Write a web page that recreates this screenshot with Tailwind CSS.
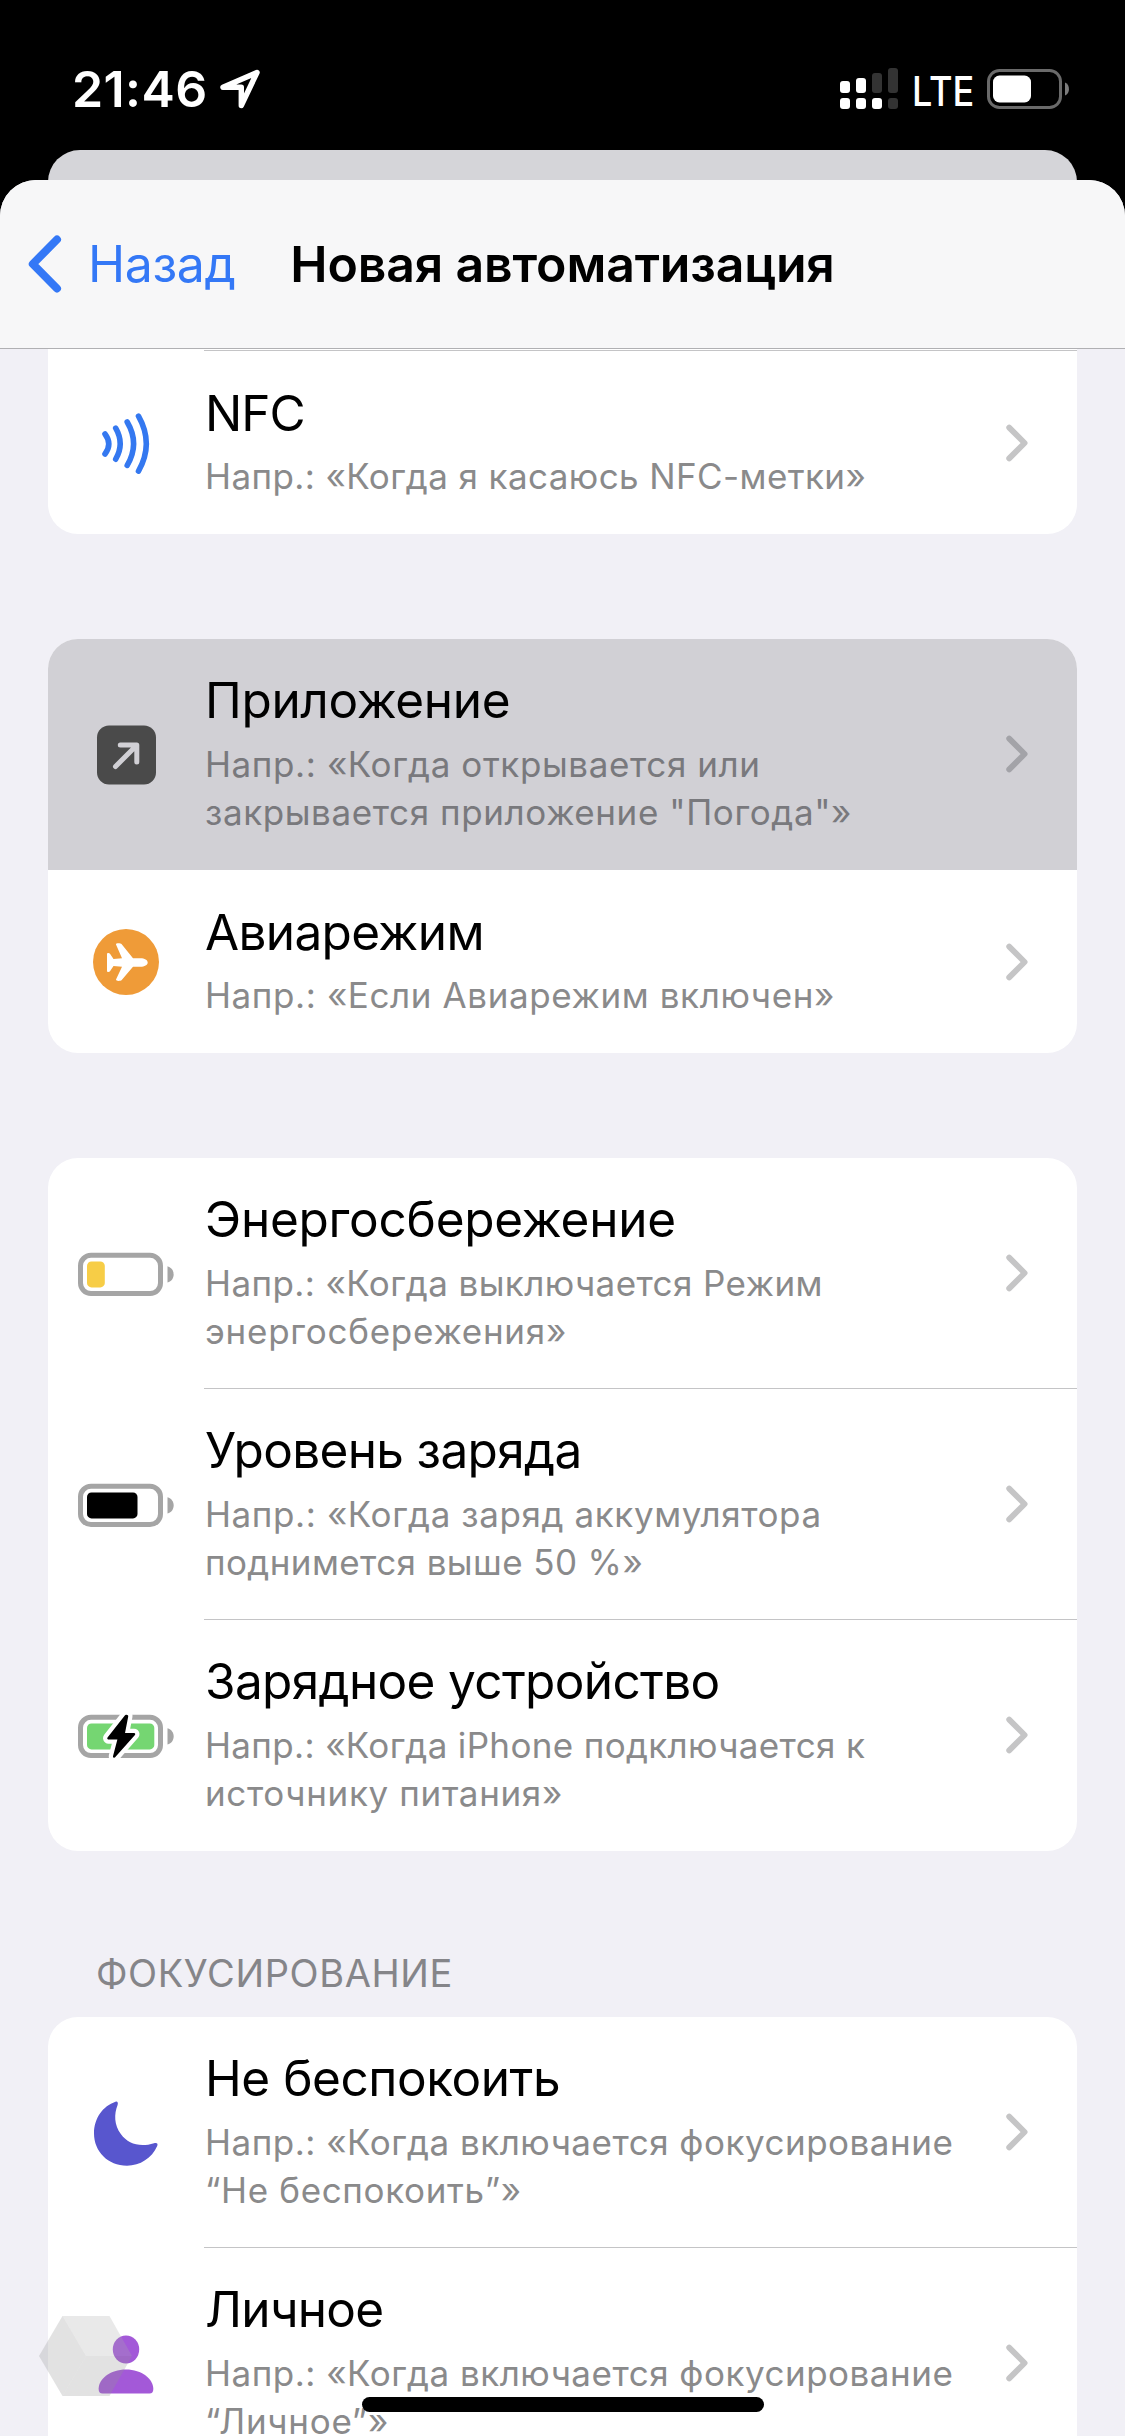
<!DOCTYPE html>
<html lang="ru">
<head>
  <meta charset="UTF-8">
  <meta name="viewport" content="width=device-width, initial-scale=1.0">
  <title>Новая автоматизация</title>
  <script src="https://cdn.jsdelivr.net/npm/@tailwindcss/browser@4"></script>
</head>
<body class="bg-black w-[1125px] h-[2436px] overflow-hidden relative font-['Inter','Liberation_Sans',sans-serif] text-black">
  <svg class="hidden">
    <symbol id="chevron" viewBox="0 0 22 38"><path d="M3.2 3.6L18.6 19L3.2 34.4" fill="none" stroke="currentColor" stroke-width="5.8" stroke-linecap="round" stroke-linejoin="round"/></symbol>
  </svg>

  <!-- status bar -->
  <header class="h-[150px] pt-[59px] pl-[72px] pr-[56px] flex justify-between items-start text-white">
    <div class="flex items-center h-[60px]">
      <span class="w-[148px] text-[50px] leading-[60px] font-semibold tracking-[0.4px]">21:46</span>
      <svg class="w-[41px] h-[42px]" viewBox="0 0 41 42" fill="none" stroke="currentColor" stroke-width="5.4" stroke-linejoin="round"><path d="M37 4.5L3 19.3H21.3V37.5Z"/></svg>
    </div>
    <div class="flex items-center h-[60px]">
      <svg class="w-[58px] h-[42px]" viewBox="0 0 58 42" fill="currentColor">
        <rect x="0" y="13" width="10" height="12" rx="3"/>
        <rect x="16" y="10" width="10" height="15" rx="3"/>
        <rect x="32" y="5" width="10" height="20" rx="3" fill="#333"/>
        <rect x="48" y="0" width="10" height="25" rx="3" fill="#333"/>
        <rect x="0" y="30" width="10" height="11" rx="3"/>
        <rect x="16" y="30" width="10" height="11" rx="3"/>
        <rect x="32" y="30" width="10" height="11" rx="3"/>
        <rect x="48" y="30" width="10" height="11" rx="3" fill="#333"/>
      </svg>
      <span class="ml-[14px] mt-[3px] w-[75px] text-[41px] leading-[60px] font-medium origin-left scale-x-[0.88]">LTE</span>
      <svg class="w-[82px] h-[40px]" viewBox="0 0 82 40">
        <rect x="1.5" y="1.5" width="72" height="37" rx="11" fill="none" stroke="#6a6a6a" stroke-width="3"/>
        <rect x="6" y="6.5" width="38" height="27" rx="6.5" fill="#fff"/>
        <path d="M78 13.5C83.3 15.5 83.3 24.5 78 26.5Z" fill="#7c7c7c"/>
      </svg>
    </div>
  </header>

  <!-- card behind the sheet -->
  <div class="mx-12 h-[66px] rounded-t-[32px] bg-[#d5d5d9]"></div>

  <!-- sheet -->
  <section class="relative -mt-9 rounded-t-[36px] overflow-hidden bg-[#f1f0f6] h-[2256px]">
    <nav class="h-[169px] bg-[#f7f7f8] border-b border-[#b0b0b3] grid grid-cols-[1fr_auto_1fr] items-center text-[50px] leading-[60px]">
      <a class="flex items-center pl-[28px] text-[#3478f6]">
        <svg class="w-[34px] h-[58px]" viewBox="0 0 34 58" fill="none" stroke="currentColor" stroke-width="8" stroke-linecap="round" stroke-linejoin="round"><path d="M29 4.5L4.8 29L29 53.5"/></svg>
        <span class="ml-[26px] tracking-[-0.4px]">Назад</span>
      </a>
      <h1 class="font-semibold tracking-[-0.15px]">Новая автоматизация</h1>
    </nav>

    <main class="px-12">
      <div class="bg-white rounded-b-[30px] overflow-hidden">
        <div class="ml-[156px] mt-px h-px bg-[#c4c4c6]"></div>
        <div class="flex">
          <div class="w-[156px] pl-[30px] flex items-center">
            <svg class="w-[96px] h-[72px]" viewBox="0 0 96 72" fill="none" stroke="#3478f0" stroke-width="5.6" stroke-linecap="round">
              <path d="M27 27Q34.6 37 27 47"/>
              <path d="M37.7 21.2Q46.7 36.7 37.7 52.2"/>
              <path d="M49.2 15Q62 36.7 49.2 58.4"/>
              <path d="M60.5 9.1Q76.1 36.6 60.5 64.1"/>
            </svg>
          </div>
          <div class="flex-1 flex items-center justify-between pl-px pr-[49px] pt-[32px] pb-[34px]">
            <div>
              <h2 class="text-[49.5px] leading-[60px] tracking-[-1px]">NFC</h2>
              <p class="mt-[9px] text-[35px] leading-[48px] tracking-[0.4px] text-[#8a8a8b]">Напр.: «Когда я касаюсь NFC-метки»</p>
            </div>
            <svg class="mt-[2px] w-[22px] h-[38px] text-[#c5c5c6]"><use href="#chevron"/></svg>
          </div>
        </div>
      </div>

      <div class="mt-[105px] bg-white rounded-[30px] overflow-hidden">
        <div class="flex bg-[#d1d0d5]">
          <div class="w-[156px] pl-[30px] flex items-center">
            <svg class="w-[96px] h-[72px]" viewBox="0 0 96 72">
              <rect x="19" y="6.5" width="59" height="59" rx="12" fill="#4a4a4a"/>
              <path d="M37.5 47.5L58 27M42.3 26H58.8V43" fill="none" stroke="#d1d0d5" stroke-width="5" stroke-linecap="round" stroke-linejoin="round"/>
            </svg>
          </div>
          <div class="flex-1 flex items-center justify-between pl-px pr-[49px] pt-[31px] pb-[34px]">
            <div>
              <h2 class="text-[49.5px] leading-[60px] tracking-[-0.35px]">Приложение</h2>
              <p class="mt-[10px] text-[35px] leading-[48px] tracking-[0.6px] text-[#79797d]">Напр.: «Когда открывается или<br>закрывается приложение "Погода"»</p>
            </div>
            <svg class="mt-[2px] w-[22px] h-[38px] text-[#a3a3a8]"><use href="#chevron"/></svg>
          </div>
        </div>
        <div class="flex">
          <div class="w-[156px] pl-[30px] flex items-center">
            <svg class="w-[96px] h-[72px]" viewBox="0 0 96 72">
              <circle cx="48" cy="36" r="33" fill="#ef9b38"/>
              <path d="M69.7 36.5C69.7 34 66.5 32.2 62.5 32.2H55L43.5 18C42.8 17.3 37.7 16.8 38 18.5L44 32.2L35.5 33L32 27.7C31.3 26.8 29 26.8 29 28V45C29 46.2 31.3 46.2 32 45.3L35.5 40L44 40.8L38 53.6C37.7 55.5 42.8 55 43.5 54.3L55 40.8H62.5C66.5 40.8 69.7 39 69.7 36.5Z" fill="#fff"/>
            </svg>
          </div>
          <div class="flex-1 flex items-center justify-between pl-px pr-[49px] pt-[32px] pb-[34px]">
            <div>
              <h2 class="text-[49.5px] leading-[60px] tracking-[-0.65px]">Авиарежим</h2>
              <p class="mt-[9px] text-[35px] leading-[48px] tracking-[0.6px] text-[#8a8a8b]">Напр.: «Если Авиарежим включен»</p>
            </div>
            <svg class="mt-[2px] w-[22px] h-[38px] text-[#c5c5c6]"><use href="#chevron"/></svg>
          </div>
        </div>
      </div>

      <div class="mt-[105px] bg-white rounded-[30px] overflow-hidden">
        <div class="flex">
          <div class="w-[156px] pl-[30px] flex items-center">
            <svg class="w-[96px] h-[72px]" viewBox="0 0 96 72">
              <rect x="2.5" y="17.3" width="80" height="38.2" rx="10.5" fill="none" stroke="#a5a5a5" stroke-width="5"/>
              <path d="M89.5 28.3C97.7 30.5 97.7 42.3 89.5 44.5Z" fill="#a5a5a5"/>
              <rect x="9" y="23.4" width="17.8" height="26" rx="4.5" fill="#f7cd46"/>
            </svg>
          </div>
          <div class="flex-1 relative flex items-center justify-between border-b border-[#c4c4c6] pl-px pr-[49px] pt-[31px] pb-[33px]">
            <div>
              <h2 class="text-[49.5px] leading-[60px] tracking-[-0.25px]">Энергосбережение</h2>
              <p class="mt-[10px] text-[35px] leading-[48px] text-[#8a8a8b]"><span class="tracking-[0.4px]">Напр.: «Когда выключается Режим</span><br><span class="tracking-[0.75px]">энергосбережения»</span></p>
            </div>
            <svg class="mt-[2px] w-[22px] h-[38px] text-[#c5c5c6]"><use href="#chevron"/></svg>
          </div>
        </div>
        <div class="flex">
          <div class="w-[156px] pl-[30px] flex items-center">
            <svg class="w-[96px] h-[72px]" viewBox="0 0 96 72">
              <rect x="2.5" y="17.3" width="80" height="38.2" rx="10.5" fill="none" stroke="#a5a5a5" stroke-width="5"/>
              <path d="M89.5 28.3C97.7 30.5 97.7 42.3 89.5 44.5Z" fill="#a5a5a5"/>
              <rect x="9" y="23.4" width="50.5" height="26" rx="4.5" fill="#000"/>
            </svg>
          </div>
          <div class="flex-1 flex items-center justify-between border-b border-[#c4c4c6] pl-px pr-[49px] pt-[31px] pb-[33px]">
            <div>
              <h2 class="text-[49.5px] leading-[60px] tracking-[-0.65px]">Уровень заряда</h2>
              <p class="mt-[10px] text-[35px] leading-[48px] text-[#8a8a8b]"><span class="tracking-[0.6px]">Напр.: «Когда заряд аккумулятора</span><br><span class="tracking-[0.4px]">поднимется выше 50 %»</span></p>
            </div>
            <svg class="mt-[2px] w-[22px] h-[38px] text-[#c5c5c6]"><use href="#chevron"/></svg>
          </div>
        </div>
        <div class="flex">
          <div class="w-[156px] pl-[30px] flex items-center">
            <svg class="w-[96px] h-[72px]" viewBox="0 0 96 72">
              <rect x="2.5" y="17.3" width="80" height="38.2" rx="10.5" fill="none" stroke="#a5a5a5" stroke-width="5"/>
              <path d="M89.5 28.3C97.7 30.5 97.7 42.3 89.5 44.5Z" fill="#a5a5a5"/>
              <rect x="9" y="23.4" width="67.3" height="26" rx="4.5" fill="#75d672"/>
              <path d="M48 16L30.5 38.2H41L36.2 56.5L56 34.2H45.5L49 16.3Z" fill="#fff" stroke="#fff" stroke-width="11" stroke-linejoin="round"/>
              <path d="M48 16L30.5 38.2H41L36.2 56.5L56 34.2H45.5L49 16.3Z" fill="#000" stroke="#000" stroke-width="2.5" stroke-linejoin="round"/>
            </svg>
          </div>
          <div class="flex-1 flex items-center justify-between pl-px pr-[49px] pt-[31px] pb-[34px]">
            <div>
              <h2 class="text-[49.5px] leading-[60px] tracking-[-0.65px]">Зарядное устройство</h2>
              <p class="mt-[10px] text-[35px] leading-[48px] text-[#8a8a8b]"><span class="tracking-[0.35px]">Напр.: «Когда iPhone подключается к</span><br><span class="tracking-[0.65px]">источнику питания»</span></p>
            </div>
            <svg class="mt-[2px] w-[22px] h-[38px] text-[#c5c5c6]"><use href="#chevron"/></svg>
          </div>
        </div>
      </div>

      <h3 class="mt-[98px] ml-12 text-[38px] leading-[48px] tracking-[0.6px] text-[#858589]">ФОКУСИРОВАНИЕ</h3>

      <div class="mt-[20px] bg-white rounded-t-[30px] overflow-hidden">
        <div class="flex">
          <div class="w-[156px] pl-[30px] flex items-center">
            <svg class="w-[96px] h-[72px]" viewBox="0 0 96 72" fill="#5856ce">
              <path d="M37.5 4.7C39.3 4 40.4 5.4 39.6 8C36 17 36 28 43 37.3C50 47 62 50.6 76 46.2C79 45.4 80.2 46.6 79.2 49C74 61 62 68.7 49 68.7C30 68.7 16 54.5 16 36.5C16 21 25 9 37.5 4.7Z"/>
            </svg>
          </div>
          <div class="flex-1 flex items-center justify-between border-b border-[#c4c4c6] pl-px pr-[49px] pt-[31px] pb-[33px]">
            <div>
              <h2 class="text-[49.5px] leading-[60px] tracking-[-0.45px]">Не беспокоить</h2>
              <p class="mt-[10px] text-[35px] leading-[48px] text-[#8a8a8b]"><span class="tracking-[0.5px]">Напр.: «Когда включается фокусирование</span><br><span class="tracking-[0.65px]">“Не беспокоить”»</span></p>
            </div>
            <svg class="mt-[2px] w-[22px] h-[38px] text-[#c5c5c6]"><use href="#chevron"/></svg>
          </div>
        </div>
        <div class="flex">
          <div class="w-[156px] pl-[30px] flex items-center">
            <svg class="w-[96px] h-[72px]" viewBox="0 0 96 72" fill="#a359d8">
              <ellipse cx="48" cy="21.5" rx="13.2" ry="14"/>
              <path d="M24.5 65.5C22 65.5 20.6 64 20.6 61C20.6 51 32 41.5 48 41.5C64 41.5 75.3 51 75.3 61C75.3 64 74 65.5 71.5 65.5Z"/>
            </svg>
          </div>
          <div class="flex-1 flex items-center justify-between pl-px pr-[49px] pt-[31px] pb-[34px]">
            <div>
              <h2 class="text-[49.5px] leading-[60px] tracking-[-0.7px]">Личное</h2>
              <p class="mt-[10px] text-[35px] leading-[48px] text-[#8a8a8b]"><span class="tracking-[0.5px]">Напр.: «Когда включается фокусирование</span><br><span class="tracking-[0.75px]">“Личное”»</span></p>
            </div>
            <svg class="mt-[2px] w-[22px] h-[38px] text-[#c5c5c6]"><use href="#chevron"/></svg>
          </div>
        </div>
      </div>
    </main>
  </section>

  <!-- translucent hexagon over the list -->
  <svg class="absolute left-[39px] top-[2316px] w-[93px] h-[80px]" viewBox="0 0 93 80">
    <path d="M23.5 0H70.5L93 40H47Z" fill="#aaa" fill-opacity=".26"/>
    <path d="M0 40L23.5 0L47 40L23.5 80Z" fill="#8e8e8e" fill-opacity=".26"/>
    <path d="M47 40H93L70.5 80H23.5Z" fill="#939393" fill-opacity=".27"/>
  </svg>

  <!-- home indicator -->
  <div class="absolute left-[362px] top-[2397px] w-[402px] h-[15px] rounded-full bg-black"></div>
</body>
</html>
